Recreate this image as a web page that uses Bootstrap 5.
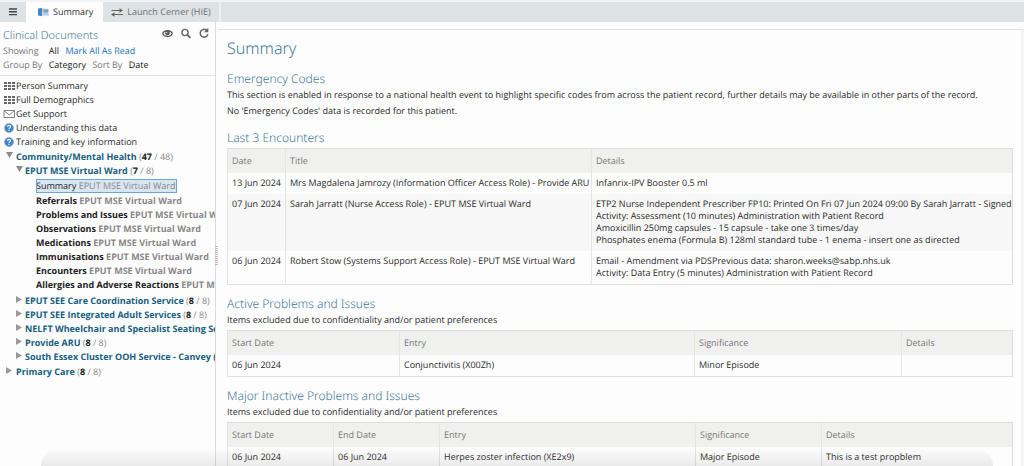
<!DOCTYPE html>
<html lang="en">
<head>
<meta charset="utf-8">
<meta name="viewport" content="width=device-width, initial-scale=1">
<title>Clinical Documents - Summary</title>
<link href="https://cdn.jsdelivr.net/npm/bootstrap@5.3.0/dist/css/bootstrap.min.css" rel="stylesheet">
<style>
  body { font: 9px/12px "Open Sans", "Noto Sans", sans-serif; color: #2b2b2b; background: #fdfdfd; text-rendering: geometricPrecision; }
  a { color: inherit; text-decoration: none; }
  button { background: none; border: 0; padding: 0; color: inherit; }

  .tabbar { height: 22px; border-top: 2px solid #f0f4f6; background: #dde2e5; flex: none; }
  .tabbar .menu-btn { width: 26px; }
  .tabbar .nav-link { color: #6c7174; border-radius: 0; padding: 0 8px; border-right: 2px solid #eef1f3; }
  .tabbar .nav-link.active { background: #fdfdfd; color: #333; border-right-color: #fdfdfd; }

  .sidebar { width: 216px; flex: none; border-right: 1px solid #dcdcdc; }
  .side-head { padding: 5px 2px 3px 3px; border-bottom: 1px solid #e2e2e2; color: #777; }
  .side-head h1 { font: 300 11px/17px "Noto Sans", sans-serif; color: #3f7a97; }
  .side-head .opts { line-height: 14px; }
  .side-head strong { font-weight: 400; color: #222; }
  .side-head .mark-read { color: #2272c3; }

  .tree { line-height: 14px; white-space: nowrap; padding-top: 3px; }
  .tree ul { padding: 0; margin: 0; list-style: none; }
  .shortcuts { padding: 0 0 1px 3px !important; }
  .shortcuts li { display: flex; align-items: center; gap: 1px; }
  .shortcuts svg { flex: none; }
  .level-2 { padding: 0 0 1px 10px !important; }
  .docs { padding: 1px 0 2px 26px !important; font-weight: 700; color: #222; }
  .docs small { font-size: inherit; color: #888; font-weight: inherit; }
  .branch { color: #17607f; font-weight: 700; }
  .branch + span { color: #888; }
  .branch + span b { color: #222; }
  .twisty { width: 16px; height: 14px; flex: none; }
  .level-2 .twisty { width: 15px; }
  .twisty svg { display: block; margin: 0 auto 4px 6px; }
  .picked { font-weight: 400; background: #d8e6f2; outline: 1px solid #6fa5d2; outline-offset: -1px; display: block; width: fit-content; padding-right: 2px; margin-bottom: 1px; }

  .grip { width: 3px; flex: none; background: repeating-linear-gradient(#b8bcc0 0 1px, transparent 1px 2px); height: 20px; margin-top: 224px; margin-left: -1px; }
  .report { margin-top: 7px; border-top: 1px solid #e2e2e2; border-right: 3px solid #f4f4f4; padding: 7px 8px 0 9px; min-width: 0; }
  .report h2, .report h3 { font-family: "Noto Sans", sans-serif; color: #3f7a97; font-weight: 300; margin: 0; }
  .report h2 { font-size: 16px; line-height: 22px; margin-bottom: 11px; }
  .report h3 { font-size: 12px; line-height: 17px; }
  .report p { margin: 0; line-height: 16px; }
  .report section + section { margin-top: 10px; }
  .records { width: 100%; table-layout: fixed; margin: 2px 0; border: 1px solid #dedede; white-space: nowrap; }
  .records th, .records td { padding: 4px 0 5px 4px; border-left: 1px solid #e4e4e4; vertical-align: top; }
  .records th { padding: 6px 4px; background: #f0f0ef; color: #777; font-weight: 400; }
  .records tr.shade td { background: #f7f7f7; }
  .w-date { width: 58px; } .w-title { width: 306px; }
  .w-start { width: 172px; } .w-entry { width: 295px; } .w-sig { width: 207px; }
  .w-day { width: 106px; } .w-problem { width: 256px; } .w-level { width: 126px; }

  .dock { left: 4%; right: 3%; bottom: 0; height: 17px; border-radius: 40px 40px 0 0; background: linear-gradient(rgba(120,120,120,.01), rgba(120,120,120,.14)); pointer-events: none; }
</style>
</head>
<body class="vh-100 d-flex flex-column overflow-hidden">

<nav class="tabbar d-flex align-items-stretch">
  <button class="menu-btn d-flex align-items-center justify-content-center" type="button" aria-label="Menu">
    <svg width="8" height="8" viewBox="0 0 8 8" stroke="#444" stroke-width="1.4"><path d="M0 1h8M0 3.8h8M0 6.6h8"/></svg>
  </button>
  <a class="nav-link active d-flex align-items-center gap-1" href="#">
    <svg class="ms-1" width="11" height="10" viewBox="0 0 11 10"><path d="M1 2l5-1 5 1v7H4z" fill="#cfe3f5"/><path d="M0 1.6l4-.8v8.4l-4-.6z" fill="#3f87cf"/><path d="M5.5 2.4h4.6v3.2H5.5z" fill="#5ba2df"/><path d="M4.5 7h5.5" stroke="#9fb6ca"/><circle cx="5.2" cy="3.4" r="1.3" fill="#e7b06a"/></svg>
    Summary
  </a>
  <a class="nav-link d-flex align-items-center gap-1" href="#">
    <svg width="12" height="9" viewBox="0 0 12 9" fill="none" stroke="#666" stroke-width="1.1"><path d="M.5 2.5h9M3 6.500h9"/><path d="M8.500.3v4.400L12 2.500zM3.500 4.300v4.400L0 6.500z" fill="#666" stroke="none"/></svg>
    Launch Cerner (HIE)
  </a>
</nav>

<div class="d-flex flex-grow-1 overflow-hidden">
  <aside class="sidebar overflow-hidden">
    <header class="side-head">
      <div class="d-flex justify-content-between align-items-start">
        <h1 class="mb-0">Clinical Documents</h1>
        <div class="d-flex align-items-center gap-2 pe-1">
          <button class="d-flex" type="button" aria-label="View"><svg width="11" height="9" viewBox="0 0 11 9"><path d="M.6 4.500C2.500.6 8.500.6 10.400 4.500 8.500 8.400 2.500 8.400.6 4.500z" fill="none" stroke="#555" stroke-width="1.100"/><circle cx="5.500" cy="4.100" r="2.300" fill="#555"/><circle cx="4.800" cy="3.400" r=".7" fill="#ddd"/></svg></button>
          <button class="d-flex" type="button" aria-label="Search"><svg width="10" height="11" viewBox="0 0 10 11" fill="none" stroke="#666"><circle cx="4" cy="4.500" r="3.100" stroke-width="1.400"/><path d="M6.300 6.800l3 3" stroke-width="1.900"/></svg></button>
          <button class="d-flex" type="button" aria-label="Refresh"><svg width="10" height="12" viewBox="0 0 10 12"><path d="M7.600 3.200A3.900 3.900 0 1 0 8.900 7.300" fill="none" stroke="#666" stroke-width="1.500"/><path d="M9.300.8v4.400H4.900z" fill="#666"/></svg></button>
        </div>
      </div>
      <div class="opts">Showing <strong class="ms-2">All</strong> <a class="mark-read ms-1" href="#">Mark All As Read</a></div>
      <div class="opts">Group By <strong class="ms-1">Category</strong> <span class="ms-1">Sort By</span> <strong class="ms-1">Date</strong></div>
    </header>

    <div class="tree">
      <ul class="shortcuts">
        <li><svg width="12" height="10" viewBox="0 0 12 10"><path d="M1 1h3v2H1zM5 1h3v2H5zM9 1h3v2H9zM1 4h3v2H1zM5 4h3v2H5zM9 4h3v2H9zM1 7h3v2H1zM5 7h3v2H5zM9 7h3v2H9z" fill="#666"/></svg><a href="#">Person Summary</a></li>
        <li><svg width="12" height="10" viewBox="0 0 12 10"><path d="M1 1h3v2H1zM5 1h3v2H5zM9 1h3v2H9zM1 4h3v2H1zM5 4h3v2H5zM9 4h3v2H9zM1 7h3v2H1zM5 7h3v2H5zM9 7h3v2H9z" fill="#666"/></svg><a href="#">Full Demographics</a></li>
        <li><svg width="12" height="10" viewBox="0 0 12 10"><path d="M1 1.500h10.500v7H1zM1 1.500l5.200 4.500 5.200-4.500" fill="none" stroke="#777" stroke-width=".9"/></svg><a href="#">Get Support</a></li>
        <li><svg width="12" height="10" viewBox="0 0 12 10"><circle cx="6" cy="5" r="4.500" fill="#3d83d3" stroke="#9aa9b8" stroke-width=".8"/><path d="M4.600 3.900c0-2 2.900-1.900 2.900-.2C7.500 4.900 6 4.800 6 6.200M6 7v1" fill="none" stroke="#fff" stroke-width="1.100"/></svg><a href="#">Understanding this data</a></li>
        <li><svg width="12" height="10" viewBox="0 0 12 10"><circle cx="6" cy="5" r="4.500" fill="#3d83d3" stroke="#9aa9b8" stroke-width=".8"/><path d="M4.600 3.900c0-2 2.900-1.900 2.900-.2C7.500 4.900 6 4.800 6 6.200M6 7v1" fill="none" stroke="#fff" stroke-width="1.100"/></svg><a href="#">Training and key information</a></li>
      </ul>
      <ul>
        <li>
          <div class="d-flex"><button class="twisty" type="button" aria-label="Collapse"><svg width="7" height="6" viewBox="0 0 7 6"><path d="M0 0h7L3.500 6z" fill="#8c8c8c"/></svg></button><a class="branch" href="#">Community/Mental Health</a><span>&nbsp;(<b>47</b> / 48)</span></div>
          <ul class="level-2">
            <li>
              <div class="d-flex"><button class="twisty" type="button" aria-label="Collapse"><svg width="7" height="6" viewBox="0 0 7 6"><path d="M0 0h7L3.500 6z" fill="#8c8c8c"/></svg></button><a class="branch" href="#">EPUT MSE Virtual Ward</a><span>&nbsp;(<b>7</b> / 8)</span></div>
              <ul class="docs">
                <li><a class="picked" href="#">Summary <small>EPUT MSE Virtual Ward</small></a></li>
                <li><a href="#">Referrals <small>EPUT MSE Virtual Ward</small></a></li>
                <li><a href="#">Problems and Issues <small>EPUT MSE Virtual W</small></a></li>
                <li><a href="#">Observations <small>EPUT MSE Virtual Ward</small></a></li>
                <li><a href="#">Medications <small>EPUT MSE Virtual Ward</small></a></li>
                <li><a href="#">Immunisations <small>EPUT MSE Virtual Ward</small></a></li>
                <li><a href="#">Encounters <small>EPUT MSE Virtual Ward</small></a></li>
                <li><a href="#">Allergies and Adverse Reactions <small>EPUT MS</small></a></li>
              </ul>
            </li>
            <li class="d-flex"><button class="twisty" type="button" aria-label="Expand"><svg width="6" height="7" viewBox="0 0 6 7"><path d="M0 0v7l6-3.500z" fill="#999"/></svg></button><a class="branch" href="#">EPUT SEE Care Coordination Service</a><span>&nbsp;(<b>8</b> / 8)</span></li>
            <li class="d-flex"><button class="twisty" type="button" aria-label="Expand"><svg width="6" height="7" viewBox="0 0 6 7"><path d="M0 0v7l6-3.500z" fill="#999"/></svg></button><a class="branch" href="#">EPUT SEE Integrated Adult Services</a><span>&nbsp;(<b>8</b> / 8)</span></li>
            <li class="d-flex"><button class="twisty" type="button" aria-label="Expand"><svg width="6" height="7" viewBox="0 0 6 7"><path d="M0 0v7l6-3.500z" fill="#999"/></svg></button><a class="branch" href="#">NELFT Wheelchair and Specialist Seating Se</a></li>
            <li class="d-flex"><button class="twisty" type="button" aria-label="Expand"><svg width="6" height="7" viewBox="0 0 6 7"><path d="M0 0v7l6-3.500z" fill="#999"/></svg></button><a class="branch" href="#">Provide ARU</a><span>&nbsp;(<b>8</b> / 8)</span></li>
            <li class="d-flex"><button class="twisty" type="button" aria-label="Expand"><svg width="6" height="7" viewBox="0 0 6 7"><path d="M0 0v7l6-3.500z" fill="#999"/></svg></button><a class="branch" href="#">South Essex Cluster OOH Service - Canvey (p</a></li>
          </ul>
        </li>
        <li class="d-flex"><button class="twisty" type="button" aria-label="Expand"><svg width="6" height="7" viewBox="0 0 6 7"><path d="M0 0v7l6-3.500z" fill="#999"/></svg></button><a class="branch" href="#">Primary Care</a><span>&nbsp;(<b>8</b> / 8)</span></li>
      </ul>
    </div>
  </aside>

  <div class="grip"></div>

  <main class="report flex-grow-1 overflow-hidden">
    <h2>Summary</h2>
    <section>
      <h3>Emergency Codes</h3>
      <p>This section is enabled in response to a national health event to highlight specific codes from across the patient record, further details may be available in other parts of the record.</p>
      <p>No 'Emergency Codes' data is recorded for this patient.</p>
    </section>
    <section>
      <h3>Last 3 Encounters</h3>
      <table class="records">
        <thead><tr><th class="w-date">Date</th><th class="w-title">Title</th><th>Details</th></tr></thead>
        <tbody>
          <tr><td>13 Jun 2024</td><td>Mrs Magdalena Jamrozy (Information Officer Access Role) - Provide ARU</td><td>Infanrix-IPV Booster 0.5 ml</td></tr>
          <tr class="shade"><td>07 Jun 2024</td><td>Sarah Jarratt (Nurse Access Role) - EPUT MSE Virtual Ward</td><td>ETP2 Nurse Independent Prescriber FP10: Printed On Fri 07 Jun 2024 09:00 By Sarah Jarratt - Signed<br>Activity: Assessment (10 minutes) Administration with Patient Record<br>Amoxicillin 250mg capsules - 15 capsule - take one 3 times/day<br>Phosphates enema (Formula B) 128ml standard tube - 1 enema - insert one as directed</td></tr>
          <tr><td>06 Jun 2024</td><td>Robert Stow (Systems Support Access Role) - EPUT MSE Virtual Ward</td><td>Email - Amendment via PDSPrevious data: sharon.weeks@sabp.nhs.uk<br>Activity: Data Entry (5 minutes) Administration with Patient Record</td></tr>
        </tbody>
      </table>
    </section>
    <section>
      <h3>Active Problems and Issues</h3>
      <p>Items excluded due to confidentiality and/or patient preferences</p>
      <table class="records">
        <thead><tr><th class="w-start">Start Date</th><th class="w-entry">Entry</th><th class="w-sig">Significance</th><th>Details</th></tr></thead>
        <tbody><tr><td>06 Jun 2024</td><td>Conjunctivitis (X00Zh)</td><td>Minor Episode</td><td></td></tr></tbody>
      </table>
    </section>
    <section>
      <h3>Major Inactive Problems and Issues</h3>
      <p>Items excluded due to confidentiality and/or patient preferences</p>
      <table class="records">
        <thead><tr><th class="w-day">Start Date</th><th class="w-day">End Date</th><th class="w-problem">Entry</th><th class="w-level">Significance</th><th>Details</th></tr></thead>
        <tbody><tr><td>06 Jun 2024</td><td>06 Jun 2024</td><td>Herpes zoster infection (XE2x9)</td><td>Major Episode</td><td>This is a test propblem</td></tr></tbody>
      </table>
    </section>
  </main>
</div>

<div class="dock position-fixed"></div>
<script src="https://cdn.jsdelivr.net/npm/bootstrap@5.3.0/dist/js/bootstrap.bundle.min.js"></script>
</body>
</html>
